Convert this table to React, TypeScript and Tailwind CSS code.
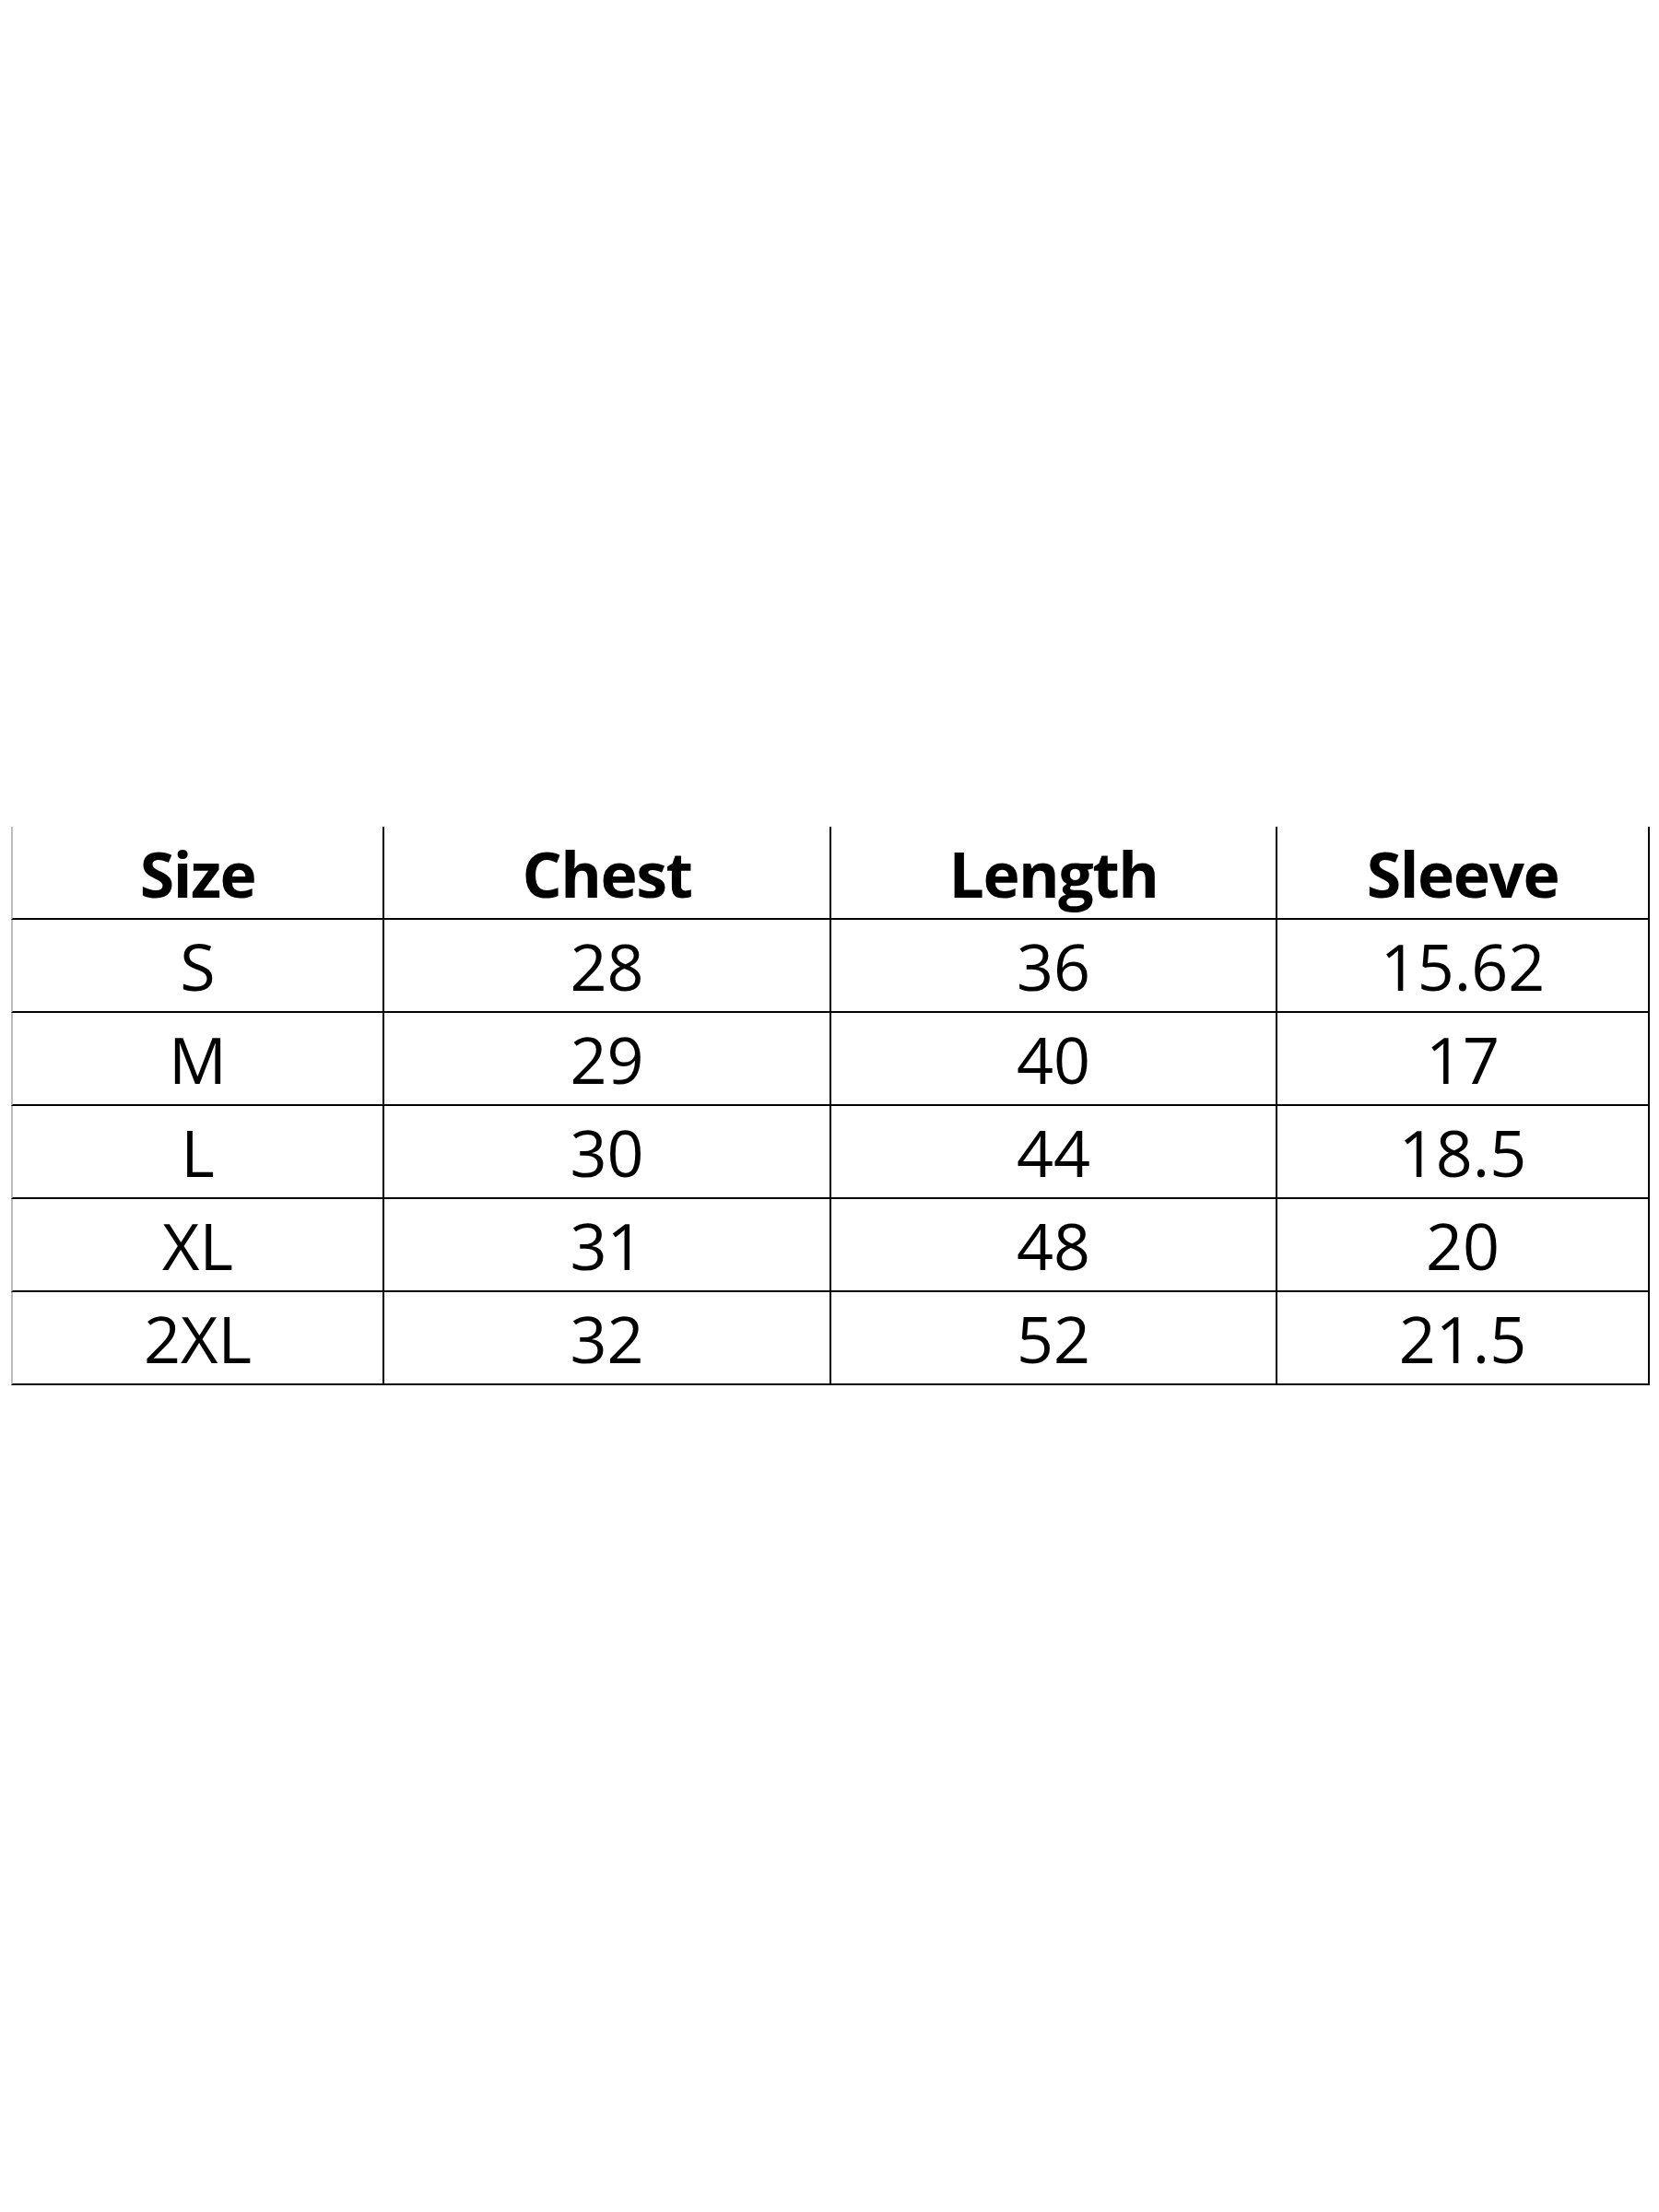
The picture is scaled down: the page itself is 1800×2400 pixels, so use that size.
import React from "react";

const header = ["Size", "Chest", "Length", "Sleeve"];
const rows = [
  ["S", "28", "36", "15.62"],
  ["M", "29", "40", "17"],
  ["L", "30", "44", "18.5"],
  ["XL", "31", "48", "20"],
  ["2XL", "32", "52", "21.5"],
];

const colClasses = [
  "w-[405px] border-l-2 border-l-[#bdbdbd]",
  "w-[485px]",
  "w-[484px]",
  "w-[404px]",
];

function Row({ cells, bold }: { cells: string[]; bold?: boolean }) {
  return (
    <div className="flex h-[101px]">
      {cells.map((c, i) => (
        <div
          key={i}
          className={`${colClasses[i]} flex items-center justify-center border-b-2 border-r-2 border-b-black border-r-black text-black leading-none ${bold ? "font-bold text-[68px] tracking-[-1.5px] pt-[2px]" : "font-normal text-[70px]"}`}
        >
          {c}
        </div>
      ))}
    </div>
  );
}

export default function App() {
  return (
    <div
      className="w-[1800px] h-[2400px] bg-white pt-[897px] pl-[12px]"
      style={{ fontFamily: '"Open Sans", "Noto Sans", sans-serif' }}
    >
      <div className="flex flex-col">
        <Row cells={header} bold />
        {rows.map((r, i) => (
          <Row key={i} cells={r} />
        ))}
      </div>
    </div>
  );
}
